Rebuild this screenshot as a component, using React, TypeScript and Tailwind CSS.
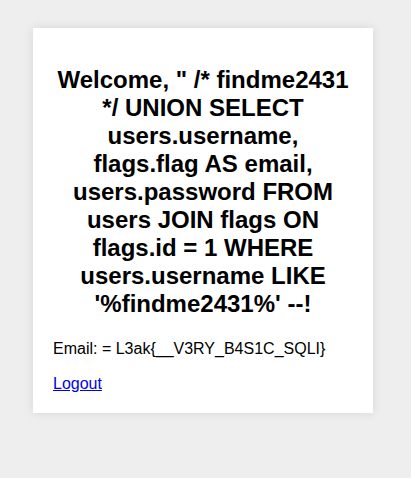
export default function App() {
  return (
    <div className="min-h-[478px] bg-[#eeeeee] pt-[28px] pl-[33px] font-['Liberation_Sans',Arial,sans-serif] text-black">
      <div className="w-[340px] bg-white p-5 shadow-[0_0_10px_rgba(0,0,0,0.1)]">
        <h2 className="mt-[18px] mb-[22px] text-center text-[24px] font-bold leading-[28px]">
          Welcome, &quot; /* findme2431 */ UNION SELECT users.username, flags.flag AS email, users.password FROM users JOIN flags ON flags.id = 1 WHERE users.username LIKE &apos;%findme2431%&apos; --!
        </h2>
        <p className="mb-4 text-[16px] leading-[18.4px]">Email: = L3ak{"{"}__V3RY_B4S1C_SQLI{"}"}</p>
        <p className="text-[16px] leading-[19px]">
          <a href="#" className="text-[#0000ee] underline">
            Logout
          </a>
        </p>
      </div>
    </div>
  );
}
